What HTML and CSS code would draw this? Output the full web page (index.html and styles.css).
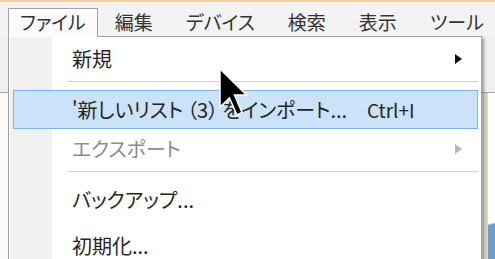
FILE: index.html
```html
<!DOCTYPE html>
<html lang="ja">
<head>
    <meta charset="UTF-8">
    <title>ファイル メニュー</title>
    <link rel="stylesheet" href="styles.css">
</head>
<body>
    <div class="window">
        <!-- Menu bar -->
        <nav class="menubar">
            <div class="menu-title active">ファイル</div>
            <div class="menu-title">編集</div>
            <div class="menu-title">デバイス</div>
            <div class="menu-title">検索</div>
            <div class="menu-title">表示</div>
            <div class="menu-title">ツール</div>
        </nav>

        <div class="workspace">
            <div class="toolbar"></div>
            <div class="content">
                <div class="pane"></div>
                <div class="side"></div>
            </div>

            <!-- File dropdown -->
            <div class="dropdown">
                <div class="item">
                    <span>新規</span>
                    <span class="arrow"></span>
                </div>
                <div class="separator"></div>
                <div class="item hover">
                    <span>'新しいリスト<span class="count">（3）</span>をインポート...</span>
                    <span class="shortcut">Ctrl+I</span>
                </div>
                <div class="item disabled">
                    <span>エクスポート</span>
                    <span class="arrow"></span>
                </div>
                <div class="separator"></div>
                <div class="item">
                    <span>バックアップ...</span>
                </div>
                <div class="item last">
                    <span>初期化...</span>
                </div>
            </div>

            <svg class="cursor" width="30" height="50" viewBox="0 0 30 50">
                <polygon points="1,1 1,39 10.5,30 18,47 23,44.5 15.5,27 27.5,27" fill="#000" stroke="#fff" stroke-width="1.5"/>
            </svg>
        </div>
    </div>
</body>
</html>
```

FILE: styles.css
```css
/* General Styling */
body {
    margin: 0;
    background-color: #f0f0f0;
    font-family: "Noto Sans CJK JP", "Noto Sans", sans-serif;
    font-feature-settings: "palt";
    color: #262626;
    overflow: hidden;
}

.window {
    width: 495px;
    height: 259px;
    display: flex;
    flex-direction: column;
}

/* Menu bar */
.menubar {
    height: 34px;
    border-top: 2px solid #ecd1aa;
    background-color: #f3f3f3;
    display: flex;
    align-items: flex-end;
    gap: 1px;
    padding-left: 8px;
}

.menu-title {
    flex-shrink: 0;
    height: 29px;
    box-sizing: border-box;
    margin-bottom: -1px;
    padding: 0 15px;
    border: 1px solid transparent;
    border-bottom: none;
    font-size: 19px;
    line-height: 26px;
    white-space: nowrap;
    color: #333;
}

.menu-title.active {
    position: relative;
    z-index: 3;
    padding: 0 11px;
    background-color: #fbfbfb;
    border-color: #a3a3a3;
}

/* Window content behind the menu */
.workspace {
    flex: 1;
    position: relative;
    display: flex;
    flex-direction: column;
}

.toolbar {
    height: 56px;
    border-bottom: 1px solid #a8a8a8;
    background-color: #f0f0f0;
}

.content {
    flex: 1;
    display: flex;
    background-color: #fafafa;
}

.pane {
    flex: 1;
}

.side {
    width: 7px;
    border-left: 5px solid #dcd8c2;
    background: linear-gradient(165deg, #fdfdfd 78%, #6d9ccf 79%);
}

/* Dropdown */
.dropdown {
    position: absolute;
    left: 8px;
    top: 0;
    z-index: 2;
    width: 474px;
    box-sizing: border-box;
    padding: 2px 3px 0 4px;
    border: 1px solid #a0a0a0;
    background: linear-gradient(to right, #fff 0 1px, #f1f1f1 1px 43px, #fff 43px);
    box-shadow: 2px 2px 3px rgba(0, 0, 0, 0.35);
}

.item {
    height: 39px;
    box-sizing: border-box;
    display: grid;
    grid-template-columns: minmax(0, 1fr) 95px;
    align-items: center;
    padding: 0 15px 0 58px;
    border: 1px solid transparent;
    font-size: 20px;
    white-space: nowrap;
}

.item.hover {
    background-color: #cbe3f8;
    border-color: #80b3e8;
}

.item.disabled {
    color: #8c8c8c;
}

.item.last {
    height: 37px;
    margin-top: 8px;
}

.count {
    padding: 0 4px;
}

.shortcut {
    font-size: 19px;
}

.arrow {
    justify-self: end;
    width: 0;
    height: 0;
    border-left: 7px solid #111;
    border-top: 5px solid transparent;
    border-bottom: 5px solid transparent;
}

.disabled .arrow {
    border-left-color: #b5b5b5;
}

.separator {
    height: 9px;
}

.separator::after {
    content: "";
    display: block;
    height: 1px;
    margin: 3px 0 0 54px;
    background-color: #d2d2d2;
}

/* Mouse pointer */
.cursor {
    position: absolute;
    left: 219px;
    top: 32px;
    z-index: 4;
}
```
